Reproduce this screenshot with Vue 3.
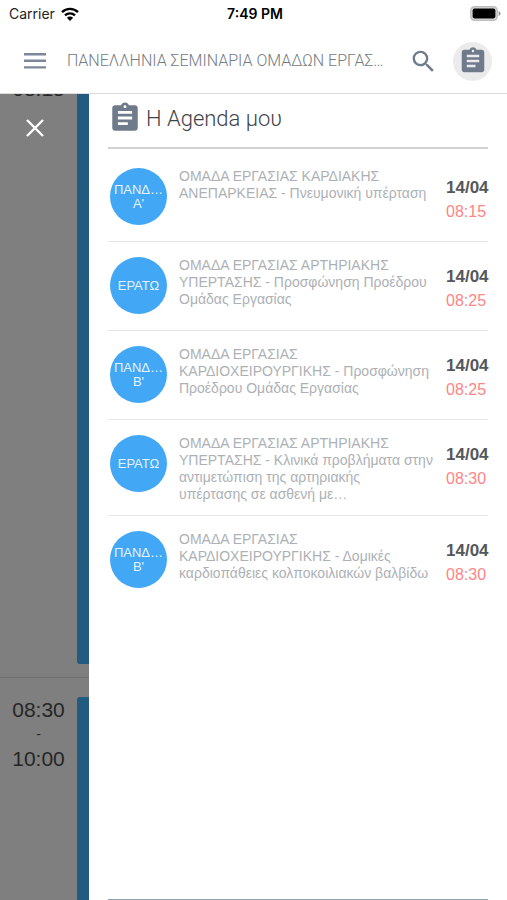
<script setup>
const items = [
  { room: ['ΠΑΝΔ…', "Α'"], text: 'ΟΜΑΔΑ ΕΡΓΑΣΙΑΣ ΚΑΡΔΙΑΚΗΣ\nΑΝΕΠΑΡΚΕΙΑΣ - Πνευμονική υπέρταση', date: '14/04', time: '08:15' },
  { room: ['ΕΡΑΤΩ'], text: 'ΟΜΑΔΑ ΕΡΓΑΣΙΑΣ ΑΡΤΗΡΙΑΚΗΣ\nΥΠΕΡΤΑΣΗΣ - Προσφώνηση Προέδρου\nΟμάδας Εργασίας', date: '14/04', time: '08:25' },
  { room: ['ΠΑΝΔ…', "Β'"], text: 'ΟΜΑΔΑ ΕΡΓΑΣΙΑΣ\nΚΑΡΔΙΟΧΕΙΡΟΥΡΓΙΚΗΣ - Προσφώνηση\nΠροέδρου Ομάδας Εργασίας', date: '14/04', time: '08:25' },
  { room: ['ΕΡΑΤΩ'], text: 'ΟΜΑΔΑ ΕΡΓΑΣΙΑΣ ΑΡΤΗΡΙΑΚΗΣ\nΥΠΕΡΤΑΣΗΣ - Κλινικά προβλήματα στην\nαντιμετώπιση της αρτηριακής\nυπέρτασης σε ασθενή με…', date: '14/04', time: '08:30' },
  { room: ['ΠΑΝΔ…', "Β'"], text: 'ΟΜΑΔΑ ΕΡΓΑΣΙΑΣ\nΚΑΡΔΙΟΧΕΙΡΟΥΡΓΙΚΗΣ - Δομικές\nκαρδιοπάθειες κολποκοιλιακών βαλβίδω', date: '14/04', time: '08:30' },
]
</script>

<template>
  <div class="app">
    <div class="status">
      <div class="carrier">
        <span>Carrier</span>
        <svg width="18" height="14" viewBox="0 0 18 14" fill="none" stroke="#000" stroke-width="2.4">
          <path d="M1 5.2a11.4 11.4 0 0 1 16 0" />
          <path d="M4 8.4a7.2 7.2 0 0 1 10 0" />
          <path d="M9 14 5.9 10.8a4.4 4.4 0 0 1 6.2 0z" fill="#000" stroke="none" />
        </svg>
      </div>
      <strong class="clock">7:49 PM</strong>
      <svg class="battery" width="31" height="15" viewBox="0 0 31 15">
        <rect x="0.8" y="0.8" width="26.4" height="13.4" rx="3.6" fill="#ddd" stroke="#bdbdbd" stroke-width="1.4" />
        <rect x="2.6" y="2.6" width="22.8" height="9.8" rx="1.8" fill="#000" />
        <path d="M28.6 5v5q2-.8 2-2.500T28.6 5z" fill="#999" />
      </svg>
    </div>

    <header class="bar">
      <button class="icon-btn" aria-label="Menu">
        <svg width="24" height="16" viewBox="0 0 24 16" fill="#7c8899">
          <path d="M1 0h22v2.400H1zM1 6.600h22V9H1zM1 13.200h22v2.400H1z" />
        </svg>
      </button>
      <h1 class="title">ΠΑΝΕΛΛΗΝΙΑ ΣΕΜΙΝΑΡΙΑ ΟΜΑΔΩΝ ΕΡΓΑΣ…</h1>
      <button class="icon-btn" aria-label="Search">
        <svg width="29" height="29" viewBox="0 0 24 24" fill="#6f7b8a">
          <path d="M15.500 14h-.79l-.28-.27A6.471 6.471 0 0 0 16 9.500 6.500 6.500 0 1 0 9.500 16c1.610 0 3.090-.59 4.230-1.570l.27.28v.79l5 4.990L20.490 19l-4.990-5zm-6 0C7.010 14 5 11.990 5 9.500S7.010 5 9.500 5 14 7.010 14 9.500 11.990 14 9.500 14z" />
        </svg>
      </button>
      <button class="icon-btn round" aria-label="Agenda">
        <svg width="30" height="30" viewBox="0 0 24 24" fill="#6f7b8a">
          <path d="M19 3h-4.180C14.400 1.840 13.300 1 12 1s-2.400.84-2.820 2H5c-1.100 0-2 .9-2 2v14c0 1.100.9 2 2 2h14c1.100 0 2-.9 2-2V5c0-1.100-.9-2-2-2zm-7 0c.55 0 1 .45 1 1s-.45 1-1 1-1-.45-1-1 .45-1 1-1zm2 14H7v-2h7v2zm3-4H7v-2h10v2zm0-4H7V7h10v2z" />
        </svg>
      </button>
    </header>

    <div class="body">
      <aside class="behind">
        <div class="slots">
          <section class="slot first">
            <div class="times"><span>08:15</span></div>
            <div class="stripe"></div>
          </section>
          <section class="slot second">
            <div class="times"><span>08:30</span><small>-</small><span>10:00</span></div>
            <div class="stripe"></div>
          </section>
        </div>
        <button class="icon-btn close" aria-label="Close">
          <svg width="18" height="18" viewBox="0 0 18 18" stroke="#fff" stroke-width="2.400" fill="none">
            <path d="M1 1l16 16M17 1L1 17" />
          </svg>
        </button>
      </aside>

      <main class="drawer">
        <h2 class="heading">
          <svg width="34" height="34" viewBox="0 0 24 24" fill="#6f7b8a">
            <path d="M19 3h-4.180C14.400 1.840 13.300 1 12 1s-2.400.84-2.820 2H5c-1.100 0-2 .9-2 2v14c0 1.100.9 2 2 2h14c1.100 0 2-.9 2-2V5c0-1.100-.9-2-2-2zm-7 0c.55 0 1 .45 1 1s-.45 1-1 1-1-.45-1-1 .45-1 1-1zm2 14H7v-2h7v2zm3-4H7v-2h10v2zm0-4H7V7h10v2z" />
          </svg>
          <span>Η Agenda μου</span>
        </h2>
        <ul class="list">
          <li v-for="(item, i) in items" :key="i" class="item">
            <div class="room"><span v-for="line in item.room" :key="line">{{ line }}</span></div>
            <p class="text">{{ item.text }}</p>
            <div class="when"><strong>{{ item.date }}</strong><span>{{ item.time }}</span></div>
          </li>
        </ul>
        <div class="foot"></div>
      </main>
    </div>
  </div>
</template>

<style>
body {
  background: #fff;
}
</style>

<style scoped>
.app {
  display: flex;
  flex-direction: column;
  height: 100vh;
  overflow: hidden;
  background: #fff;
  font-family: "Liberation Sans", Arial, sans-serif;
}
.status {
  display: grid;
  grid-template-columns: 1fr auto 1fr;
  align-items: center;
  height: 27px;
  padding: 0 6px 0 9px;
  font-family: Inter, sans-serif;
  font-size: 14px;
  color: #222;
}
.carrier {
  display: flex;
  align-items: center;
  gap: 6px;
}
.clock {
  font-weight: 600;
  color: #000;
}
.battery {
  justify-self: end;
}
.bar {
  display: flex;
  align-items: center;
  height: 64px;
  padding: 2px 15px 0 23px;
  border-bottom: 1px solid #dcdcdc;
}
.icon-btn {
  display: flex;
  align-items: center;
  justify-content: center;
  padding: 0;
  border: 0;
  background: none;
}
.title {
  flex: 1;
  min-width: 0;
  margin: 0 0 0 20px;
  overflow: hidden;
  font-family: Roboto, sans-serif;
  font-size: 16px;
  font-weight: 300;
  line-height: 20px;
  white-space: nowrap;
  color: #747b82;
}
.round {
  width: 39px;
  height: 39px;
  margin-left: 15px;
  border-radius: 50%;
  background: #ebebeb;
}
.body {
  display: flex;
  flex: 1;
  min-height: 0;
}
.behind {
  position: relative;
  flex: 0 0 89px;
  overflow: hidden;
  background: #7f7f7f;
}
.slots {
  display: flex;
  flex-direction: column;
  height: 100%;
}
.slot {
  display: flex;
  justify-content: space-between;
}
.first {
  height: 583px;
  border-bottom: 1px solid #717171;
}
.first .times {
  margin-top: -18px;
}
.first .stripe {
  margin-bottom: 13px;
  border-radius: 0 0 0 3px;
}
.second {
  flex: 1;
  padding-top: 19px;
}
.second .stripe {
  border-radius: 3px 0 0 0;
}
.times {
  display: flex;
  flex-direction: column;
  width: 77px;
  text-align: center;
  font-size: 21px;
  line-height: 25px;
  color: #262626;
}
.times small {
  font-size: 14px;
  line-height: 24px;
}
.stripe {
  width: 12px;
  background: #225b80;
}
.close {
  position: absolute;
  top: 25px;
  left: 26px;
}
.drawer {
  display: flex;
  flex: 1;
  flex-direction: column;
  min-width: 0;
  padding: 0 19px;
  background: #fff;
}
.heading {
  display: flex;
  align-items: center;
  gap: 4px;
  height: 48px;
  margin: 0;
  padding-bottom: 5px;
  border-bottom: 2px solid #d0d1d3;
  font-family: Roboto, sans-serif;
  font-size: 22px;
  font-weight: 300;
  color: #3f4449;
}
.list {
  margin: 0;
  padding: 4px 0 0;
  list-style: none;
}
.item {
  display: grid;
  grid-template-columns: 57px 1fr 42px;
  align-items: start;
  column-gap: 12px;
  box-sizing: border-box;
  min-height: 89px;
  padding: 15px 0 12px 2px;
  border-bottom: 1px solid #e6e6e6;
}
.item:last-child {
  border-bottom: 0;
}
.room {
  display: flex;
  flex-direction: column;
  align-items: center;
  justify-content: center;
  height: 57px;
  border-radius: 50%;
  background: #42a8f5;
  font-size: 13px;
  line-height: 14px;
  color: #e3f2fe;
}
.text {
  min-width: 0;
  margin: 0;
  font-size: 14px;
  line-height: 17px;
  white-space: pre;
  color: #adb1b5;
}
.when {
  display: flex;
  flex-direction: column;
  margin-top: 8px;
  font-size: 16px;
  line-height: 24px;
  color: #ff8585;
}
.when strong {
  font-size: 17px;
  font-weight: 700;
  color: #55585b;
}
.foot {
  height: 1px;
  margin-top: auto;
  background: #8fa5b0;
}
</style>
